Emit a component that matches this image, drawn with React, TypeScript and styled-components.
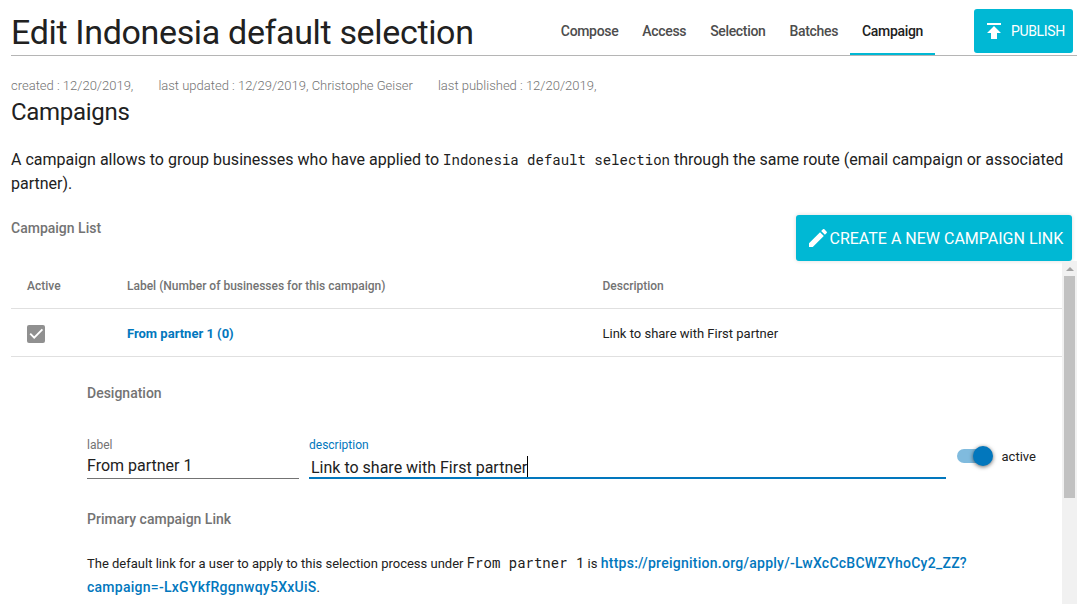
import React from 'react';
import styled, { createGlobalStyle } from 'styled-components';

const primary = '#0277bd';
const accent = '#00b8d4';
const ink = '#212121';
const muted = '#737373';

const GlobalStyle = createGlobalStyle`
  * { box-sizing: border-box; }
  html, body { margin: 0; padding: 0; background: #fff; overflow: hidden; }
  body { font-family: Roboto, "Liberation Sans", sans-serif; font-size: 14px; color: ${ink}; }
`;

const Page = styled.div`
  display: flex;
  flex-direction: column;
  width: 1091px;
  height: 604px;
  padding: 0 14px 0 11px;
  overflow: hidden;
`;

const Header = styled.header`
  display: flex;
  flex: none;
  height: 56px;
  border-bottom: 1px solid #b5b5b5;
`;

const Title = styled.h1`
  flex: 1;
  margin: 0;
  padding-top: 12px;
  font-size: 34px;
  line-height: 40px;
  font-weight: 400;
  letter-spacing: -0.01em;
  white-space: nowrap;
`;

const Tabs = styled.nav`
  display: flex;
  height: 55px;
  margin-right: 39px;
`;

const Tab = styled.a<{ $active?: boolean }>`
  display: flex;
  align-items: center;
  padding: 9px 12px 0;
  border-bottom: 2px solid ${(p) => (p.$active ? accent : 'transparent')};
  color: ${(p) => (p.$active ? ink : '#4d4d4d')};
  font-weight: 500;
  font-size: 14px;
  line-height: 20px;
  letter-spacing: -0.33px;
`;

const Button = styled.button<{ $large?: boolean }>`
  display: flex;
  flex: none;
  align-items: center;
  width: ${(p) => (p.$large ? 276 : 99)}px;
  height: ${(p) => (p.$large ? 46 : 44)}px;
  padding: ${(p) => (p.$large ? '1px 0 0 9.5px' : '0 0 0 8px')};
  gap: ${(p) => (p.$large ? 0 : 5)}px;
  border: 0;
  border-radius: 3px;
  background: ${accent};
  box-shadow: ${(p) => (p.$large ? '0 0 4px rgba(0, 0, 0, 0.14)' : 'none')};
  color: #fff;
  font: 400 ${(p) => (p.$large ? 16 : 14)}px/24px Roboto, sans-serif;
  letter-spacing: ${(p) => (p.$large ? 0 : -0.35)}px;
  text-transform: uppercase;
  white-space: nowrap;

  svg {
    flex: none;
    margin-bottom: ${(p) => (p.$large ? 1 : 0)}px;
    fill: #fff;
  }
`;

const PublishButton = styled(Button)`
  margin-top: 9px;
  margin-right: 4px;
`;

const Meta = styled.div`
  display: flex;
  gap: 25px;
  padding-top: 22px;
  font-size: 13px;
  line-height: 16px;
  font-weight: 300;
  color: ${muted};
  white-space: nowrap;
`;

const Heading = styled.h2`
  margin: 4px 0 0;
  font-size: 24px;
  line-height: 28px;
  font-weight: 400;
  letter-spacing: -0.012em;
`;

const Intro = styled.p`
  margin: 22px 0 0;
  font-size: 16px;
  line-height: 24px;
`;

const Code = styled.code`
  font-family: "Roboto Mono", "DejaVu Sans Mono", monospace;
  font-size: 14px;
  line-height: 1;
`;

const ListBar = styled.div`
  display: flex;
  justify-content: space-between;
  height: 46px;
  margin-top: 19px;
  padding-right: 5px;
`;

const Subtitle = styled.h3`
  margin: 0;
  font-size: 14px;
  line-height: 26px;
  font-weight: 500;
  color: ${muted};
`;

const ScrollArea = styled.div`
  display: flex;
  flex: 1;
  min-height: 0;
`;

const Content = styled.main`
  flex: 1;
  min-width: 0;
  overflow: hidden;
`;

const Row = styled.div<{ $head?: boolean }>`
  display: grid;
  grid-template-columns: 100px 475.5px 1fr;
  align-items: center;
  height: 48px;
  padding: 2px 0 0 16px;
  border-bottom: 1px solid #e0e0e0;
  font-size: ${(p) => (p.$head ? 12 : 13)}px;
  font-weight: ${(p) => (p.$head ? 500 : 400)};
  color: ${(p) => (p.$head ? muted : ink)};
`;

const Checkbox = styled.span`
  display: flex;
  width: 18px;
  height: 18px;
  border-radius: 2px;
  background: #909090;
`;

const RowLink = styled.a`
  color: ${primary};
  font-weight: 700;
`;

const Details = styled.section`
  padding: 23px 0 0 76px;
`;

const Fields = styled.div`
  display: flex;
  margin-top: 31px;
  height: 42px;
`;

const Field = styled.label<{ $focused?: boolean; $width: number }>`
  display: flex;
  flex-direction: column;
  width: ${(p) => p.$width}px;
  height: 42px;
  margin-right: 10px;
  border-bottom: ${(p) => (p.$focused ? `2px solid ${primary}` : '1px solid #737373')};
`;

const FieldLabel = styled.span<{ $focused?: boolean }>`
  font-size: 12px;
  line-height: 16px;
  color: ${(p) => (p.$focused ? primary : muted)};
`;

const FieldValue = styled.span<{ $focused?: boolean }>`
  display: flex;
  padding: ${(p) => (p.$focused ? '3px 0 0 2px' : '1px 0 0')};
  font-size: 16px;
  line-height: 24px;
`;

const Caret = styled.i`
  width: 1px;
  height: 21px;
  background: #000;
`;

const Toggle = styled.div`
  display: flex;
  align-items: center;
  height: 38px;
  gap: 8.5px;
  margin-left: 1px;
  font-size: 13px;
`;

const Track = styled.span`
  display: flex;
  align-items: center;
  justify-content: flex-end;
  width: 36px;
  height: 14px;
  border-radius: 8px;
  background: linear-gradient(90deg, #80bbde 28px, transparent 28px);
`;

const Knob = styled.span`
  width: 20px;
  height: 20px;
  border-radius: 50%;
  background: ${primary};
  box-shadow: 0 1px 4px rgba(0, 0, 0, 0.6);
`;

const LinkTitle = styled(Subtitle)`
  margin-top: 27px;
`;

const LinkText = styled.p`
  margin: 20px 0 0;
  font-size: 13px;
  line-height: 24px;
`;

const ApplyLink = styled.a`
  font-size: 14px;
  line-height: 20px;
  font-weight: 500;
  letter-spacing: 0.26px;
  color: ${primary};
`;

const Scrollbar = styled.div`
  display: flex;
  flex: none;
  flex-direction: column;
  align-items: center;
  width: 15px;
  background: #f1f1f1;
`;

const ScrollArrow = styled.span`
  width: 0;
  height: 0;
  margin: 6px 0 5px;
  border: 4px solid transparent;
  border-top: 0;
  border-bottom-color: #a3a3a3;
`;

const Thumb = styled.span`
  width: 11px;
  height: 222px;
  background: #c1c1c1;
`;

const tabs = ['Compose', 'Access', 'Selection', 'Batches', 'Campaign'];

export default function App() {
  return (
    <>
      <GlobalStyle />
      <Page>
        <Header>
          <Title>Edit Indonesia default selection</Title>
          <Tabs>
            {tabs.map((name) => (
              <Tab key={name} $active={name === 'Campaign'}>{name}</Tab>
            ))}
          </Tabs>
          <PublishButton>
            <svg width="24" height="24" viewBox="0 0 24 24">
              <path d="M5 4v2h14V4H5zm0 10h4v6h6v-6h4l-7-7-7 7z" />
            </svg>
            Publish
          </PublishButton>
        </Header>
        <Meta>
          <span>created : 12/20/2019,</span>
          <span>last updated : 12/29/2019, Christophe Geiser</span>
          <span>last published : 12/20/2019,</span>
        </Meta>
        <Heading>Campaigns</Heading>
        <Intro>
          A campaign allows to group businesses who have applied to <Code>Indonesia default selection</Code> through
          the same route (email campaign or associated partner).
        </Intro>
        <ListBar>
          <Subtitle>Campaign List</Subtitle>
          <Button $large>
            <svg width="24" height="24" viewBox="0 0 24 24">
              <path d="M3 17.25V21h3.75L17.81 9.94l-3.75-3.75L3 17.25zM20.71 7.04c.39-.39.39-1.02 0-1.41l-2.34-2.34c-.39-.39-1.02-.39-1.41 0l-1.83 1.83 3.75 3.75 1.83-1.83z" />
            </svg>
            Create a new campaign link
          </Button>
        </ListBar>
        <ScrollArea>
          <Content>
            <Row $head>
              <span>Active</span>
              <span>Label (Number of businesses for this campaign)</span>
              <span>Description</span>
            </Row>
            <Row>
              <Checkbox>
                <svg width="18" height="18" viewBox="0 0 18 18" fill="none" stroke="#fff" strokeWidth="1.9">
                  <path d="M3.2 8.6l4 4 8.2-8.3" />
                </svg>
              </Checkbox>
              <RowLink>From partner 1 (0)</RowLink>
              <span>Link to share with First partner</span>
            </Row>
            <Details>
              <Subtitle>Designation</Subtitle>
              <Fields>
                <Field $width={212}>
                  <FieldLabel>label</FieldLabel>
                  <FieldValue>From partner 1</FieldValue>
                </Field>
                <Field $width={637} $focused>
                  <FieldLabel $focused>description</FieldLabel>
                  <FieldValue $focused>
                    Link to share with First partner
                    <Caret />
                  </FieldValue>
                </Field>
                <Toggle>
                  <Track><Knob /></Track>
                  active
                </Toggle>
              </Fields>
              <LinkTitle>Primary campaign Link</LinkTitle>
              <LinkText>
                The default link for a user to apply to this selection process under <Code>From partner 1</Code> is{' '}
                <ApplyLink>https://preignition.org/apply/-LwXcCcBCWZYhoCy2_ZZ?<br />campaign=-LxGYkfRggnwqy5XxUiS</ApplyLink>.
              </LinkText>
            </Details>
          </Content>
          <Scrollbar>
            <ScrollArrow />
            <Thumb />
          </Scrollbar>
        </ScrollArea>
      </Page>
    </>
  );
}
